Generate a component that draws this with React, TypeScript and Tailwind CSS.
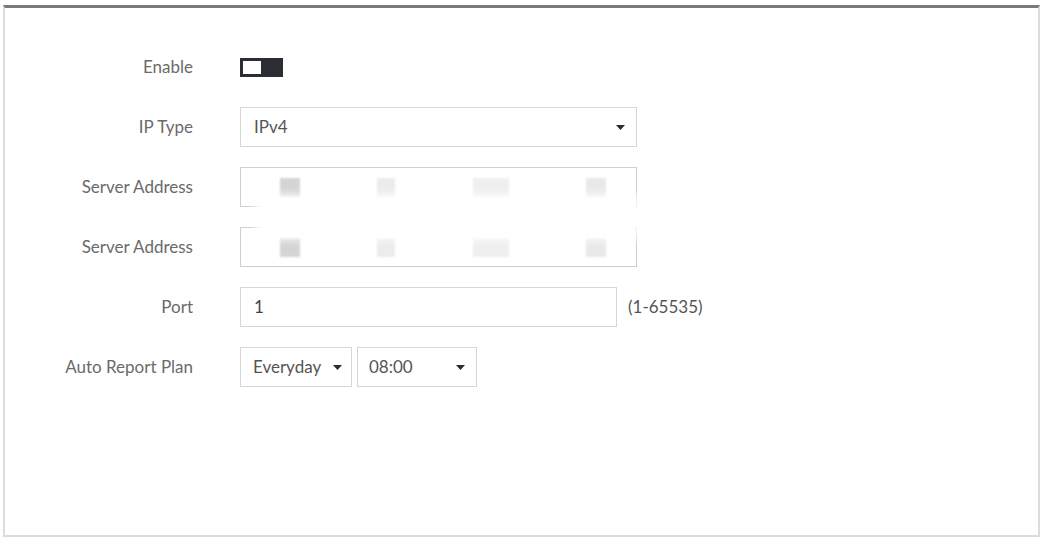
import { ReactNode } from 'react';

function Caret() {
  return (
    <svg width="9" height="5" viewBox="0 0 9 5" className="shrink-0">
      <path d="M0 0h9L4.5 5z" fill="#2b2b2b" />
    </svg>
  );
}

function Row({ label, children }: { label: string; children: ReactNode }) {
  return (
    <div className="flex items-center h-10">
      <div className="w-[188px] text-right text-[17px] text-[#6a6a6a]">{label}</div>
      <div className="ml-[47px] flex items-center">{children}</div>
    </div>
  );
}

function Select({ value, width, pad }: { value: string; width: string; pad: string }) {
  return (
    <div className={`${width} ${pad} h-10 flex items-center justify-between border border-[#d6d6d6] bg-white text-[17px] text-[#555]`}>
      <span>{value}</span>
      <Caret />
    </div>
  );
}

// masked address field, octets hidden behind grey blocks
function MaskedInput() {
  const blocks = [
    'w-[20px] bg-[#d4d4d4]',
    'w-[18px] bg-[#ececec] ml-[77px]',
    'w-[36px] bg-[#efefef] ml-[78px]',
    'w-[20px] bg-[#e9e9e9] ml-[77px]',
  ];
  return (
    <div className="w-[397px] h-10 border border-[#cfcfcf] bg-white flex items-center pl-[39px]">
      {blocks.map((b, i) => (
        <div key={i} className={`h-[19px] blur-[1px] ${b}`} />
      ))}
    </div>
  );
}

export default function App() {
  return (
    <div className="w-[1042px] h-[540px] bg-white overflow-hidden" style={{ fontFamily: 'Lato, "Open Sans", sans-serif' }}>
      <div className="ml-[3px] mt-[5px] w-[1037px] h-[532px] border-x-2 border-b-2 border-t-[3px] border-[#dcdcdc] border-t-[#7a7a7a]">
        <div className="pt-[39px] flex flex-col gap-5">
          <Row label="Enable">
            <div className="w-[43px] h-[19px] bg-[#2a2d33] p-[3px]">
              <div className="w-[18px] h-full bg-white" />
            </div>
          </Row>

          <Row label="IP Type">
            <Select value="IPv4" width="w-[397px]" pad="pl-[13px] pr-[11px]" />
          </Row>

          <div className="relative flex flex-col gap-5">
            <Row label="Server Address">
              <MaskedInput />
            </Row>
            <Row label="Server Address">
              <MaskedInput />
            </Row>
            {/* white smear hiding the middle of the address */}
            <div className="absolute left-[250px] top-[28px] w-[384px] h-[44px] bg-white blur-[5px]" />
          </div>

          <Row label="Port">
            <div className="w-[377px] h-10 border border-[#d6d6d6] flex items-center pl-[13px] text-[17px] text-[#444]">1</div>
            <span className="ml-[11px] text-[17px] text-[#555]">(1-65535)</span>
          </Row>

          <Row label="Auto Report Plan">
            <Select value="Everyday" width="w-[112px]" pad="pl-[12px] pr-[9px]" />
            <div className="ml-[5px]">
              <Select value="08:00" width="w-[120px]" pad="pl-[11px] pr-[11px]" />
            </div>
          </Row>
        </div>
      </div>
    </div>
  );
}
